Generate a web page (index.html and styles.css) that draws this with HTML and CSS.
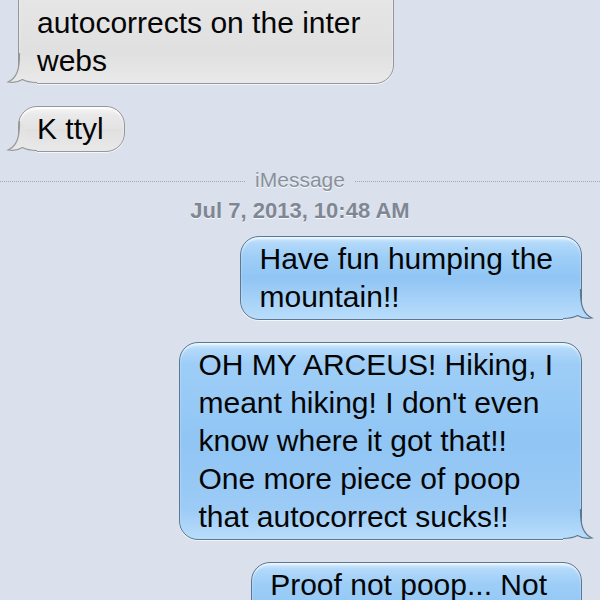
FILE: index.html
```html
<!DOCTYPE html>
<html>
<head>
<meta charset="utf-8">
<link rel="stylesheet" href="styles.css">
</head>
<body>
<div class="thread">
  <div class="row in">
    <div class="bubble gray cut">autocorrects on the inter<br>webs<svg class="tail" viewBox="0 0 34 34" width="34" height="34"><defs><linearGradient id="tg" gradientUnits="userSpaceOnUse" x1="0" y1="2" x2="0" y2="32"><stop offset="0" stop-color="#e0e0e0"/><stop offset="1" stop-color="#e9e9e9"/></linearGradient></defs><path class="mask" d="M4 31.5 C10 31.5 14.5 31 18.5 28.6 C22.5 31 28 32 33 31 L34 31 L34 34 L4 34 Z"/><path d="M21.5 4 C21.5 18 24 27 33 31 C28 32 22.5 31 18.5 28.6 C14.5 31 10 31.5 4 31.5 L10 22 L18 6 Z" fill="url(#tg)"/><path class="edge" d="M21.5 2 L21.5 4 C21.5 18 24 27 33 31 C28 32 22.5 31 18.5 28.6 C14.5 31 10 31.5 4 31.5"/></svg></div>
  </div>
  <div class="row in gap">
    <div class="bubble gray">K ttyl<svg class="tail" viewBox="0 0 34 34" width="34" height="34"><path class="mask" d="M4 31.5 C10 31.5 14.5 31 18.5 28.6 C22.5 31 28 32 33 31 L34 31 L34 34 L4 34 Z"/><path d="M21.5 4 C21.5 18 24 27 33 31 C28 32 22.5 31 18.5 28.6 C14.5 31 10 31.5 4 31.5 L10 22 L18 6 Z" fill="url(#tg)"/><path class="edge" d="M21.5 2 L21.5 4 C21.5 18 24 27 33 31 C28 32 22.5 31 18.5 28.6 C14.5 31 10 31.5 4 31.5"/></svg></div>
  </div>
  <div class="stamp">
    <div class="service"><span class="dots"></span><span class="svc-name">iMessage</span><span class="dots"></span></div>
    <div class="date">Jul 7, 2013, 10:48 AM</div>
  </div>
  <div class="row out first">
    <div class="bubble blue">Have fun humping the<br>mountain!!<svg class="tail" viewBox="0 0 34 34" width="34" height="34"><defs><linearGradient id="tb" gradientUnits="userSpaceOnUse" x1="0" y1="2" x2="0" y2="32"><stop offset="0" stop-color="#9ccbf6"/><stop offset="1" stop-color="#b9ddfb"/></linearGradient></defs><path class="mask" d="M4 31.5 C10 31.5 14.5 31 18.5 28.6 C22.5 31 28 32 33 31 L34 31 L34 34 L4 34 Z"/><path d="M21.5 4 C21.5 18 24 27 33 31 C28 32 22.5 31 18.5 28.6 C14.5 31 10 31.5 4 31.5 L10 22 L18 6 Z" fill="url(#tb)"/><path class="edge" d="M21.5 2 L21.5 4 C21.5 18 24 27 33 31 C28 32 22.5 31 18.5 28.6 C14.5 31 10 31.5 4 31.5"/></svg></div>
  </div>
  <div class="row out gap">
    <div class="bubble blue">OH MY ARCEUS! Hiking, I<br>meant hiking! I don't even<br>know where it got that!!<br>One more piece of poop<br>that autocorrect sucks!!<svg class="tail" viewBox="0 0 34 34" width="34" height="34"><path class="mask" d="M4 31.5 C10 31.5 14.5 31 18.5 28.6 C22.5 31 28 32 33 31 L34 31 L34 34 L4 34 Z"/><path d="M21.5 4 C21.5 18 24 27 33 31 C28 32 22.5 31 18.5 28.6 C14.5 31 10 31.5 4 31.5 L10 22 L18 6 Z" fill="url(#tb)"/><path class="edge" d="M21.5 2 L21.5 4 C21.5 18 24 27 33 31 C28 32 22.5 31 18.5 28.6 C14.5 31 10 31.5 4 31.5"/></svg></div>
  </div>
  <div class="row out gap">
    <div class="bubble blue last">Proof not poop... Not</div>
  </div>
</div>
</body>
</html>
```
FILE: styles.css
```css
html, body {
  margin: 0;
  height: 600px;
  overflow: hidden;
}
body {
  background: #dae1ec;
  font-family: "Liberation Sans", Arial, Helvetica, sans-serif;
}
.thread {
  display: flex;
  flex-direction: column;
  padding: 0 18px;
  margin-top: -40px;
}
.row {
  display: flex;
}
.row.in { justify-content: flex-start; }
.row.out { justify-content: flex-end; }
.row.gap { margin-top: 22px; }
.row.first { margin-top: 12px; }

.bubble {
  position: relative;
  font-size: 30px;
  line-height: 38px;
  border: 1px solid;
  border-radius: 19px;
  color: #050505;
}
.bubble.gray {
  padding: 3px 20px 3px 18px;
  border-color: #979797;
  border-bottom-left-radius: 0;
  background: linear-gradient(to bottom, #f7f7f7 0px, #e9e9e9 8px, #e3e3e3 50%, #e0e0e0 calc(100% - 30px), #e9e9e9 100%);
  box-shadow: inset 0 2px 2px rgba(255,255,255,0.8), 0 1px 0 rgba(255,255,255,0.7);
}
.bubble.blue {
  padding: 3px 28px 3px 18px;
  border-color: #5d7791;
  border-bottom-right-radius: 0;
  background: linear-gradient(to bottom, #d6ecfd 0px, #b3d9fa 6px, #9ecef7 20px, #90c5f4 50%, #9ccbf6 calc(100% - 30px), #b9ddfb 100%);
  box-shadow: inset 0 2px 2px rgba(255,255,255,0.6), 0 1px 0 rgba(255,255,255,0.7);
}
.bubble.cut {
  padding-top: 43px;
  padding-right: 32px;
}
.bubble.last {
  padding-bottom: 60px;
  padding-right: 34px;
}
.tail {
  position: absolute;
  bottom: -2px;
  width: 34px;
  height: 34px;
  overflow: visible;
}
.blue .tail { right: -12px; }
.gray .tail { left: -12px; transform: scaleX(-1); }
.tail .mask { fill: #dae1ec; }
.tail .edge { fill: none; stroke-width: 1.2; }
.blue .tail .edge { stroke: #5d7791; }
.gray .tail .edge { stroke: #979797; }

.stamp {
  margin: 16px -18px 0;
  color: #89909c;
  text-shadow: 0 1px 0 rgba(255,255,255,0.8);
  text-align: center;
}
.service {
  display: flex;
  align-items: center;
  gap: 10px;
  font-size: 21px;
  line-height: 24px;
}
.dots {
  flex: 1;
  border-top: 1px dotted #a3a9b4;
  margin-top: 3px;
}
.date {
  margin-top: 6px;
  font-size: 22px;
  line-height: 26px;
  font-weight: bold;
  color: #7f8795;
}
```
